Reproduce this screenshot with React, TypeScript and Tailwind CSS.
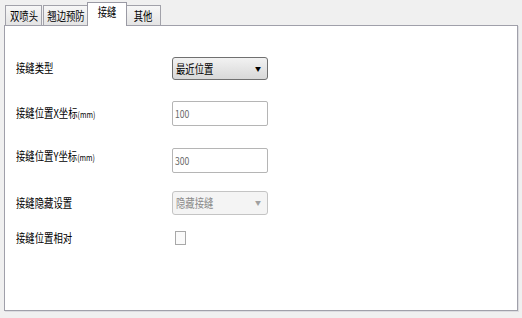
import React from 'react';

const font = { fontFamily: '"Noto Sans CJK SC", "Noto Sans", sans-serif' };

const tabs = ['双喷头', '翘边预防', '接缝', '其他'];

// narrow bitmap-like glyphs of the original dialog
const Narrow: React.FC<{ children: React.ReactNode; className?: string }> = ({ children, className = '' }) => (
  <span className={`inline-block whitespace-nowrap origin-left scale-x-[0.78] ${className}`}>{children}</span>
);

const Tab: React.FC<{ label: string; active?: boolean; w: string }> = ({ label, active, w }) =>
  active ? (
    <div className={`${w} h-[24px] -mb-px -mx-px z-10 bg-white border border-b-0 border-[#9a9aa4] flex items-start justify-center pt-[3px] text-[12px] text-black`}>
      <span className="inline-block whitespace-nowrap scale-x-[0.78]">{label}</span>
    </div>
  ) : (
    <div className={`${w} h-[20px] bg-gradient-to-b from-[#f7f7f7] to-[#e4e4e4] border border-b-0 border-[#a2a2aa] flex items-center justify-center text-[12px] text-black`}>
      <span className="inline-block whitespace-nowrap scale-x-[0.78]">{label}</span>
    </div>
  );

export default function App() {
  return (
    <div className="w-[522px] h-[318px] bg-[#f0f0f0] pl-[4px] pt-[2px] leading-none" style={font}>
      <div className="flex items-end pl-[1px] h-[23px]">
        <Tab label={tabs[0]} w="w-[37px]" />
        <div className="w-[1px]" />
        <Tab label={tabs[1]} w="w-[45px]" />
        <Tab label={tabs[2]} w="w-[40px]" active />
        <Tab label={tabs[3]} w="w-[35px]" />
      </div>
      <div className="w-[514px] h-[286px] bg-white border border-[#a0a0aa] shadow-[1px_1px_0_#dcdce0] pl-[11px] pt-[31px]">
        <div className="flex items-center h-[23px]">
          <div className="w-[156px] text-[12px] text-black -mt-[2px]"><Narrow>接缝类型</Narrow></div>
          <div className="w-[96px] h-[23px] rounded-[3px] border border-[#707070] bg-gradient-to-b from-[#f2f2f2] to-[#d8d8d8] flex items-center justify-between pl-[3px] pr-[6px] text-[12px] text-black">
            <Narrow>最近位置</Narrow>
            <span className="text-[6px]">▼</span>
          </div>
        </div>

        <div className="flex items-center h-[25px] mt-[21px]">
          <div className="w-[156px] text-[12px] text-black -mt-[2px]">
            <Narrow>接缝位置X坐标<span className="text-[9px]">(mm)</span></Narrow>
          </div>
          <div className="w-[96px] h-[25px] border border-[#b5b5b5] rounded-[2px] bg-white flex items-center pl-[2px] text-[11px] text-[#6a6a6a]">
            <Narrow>100</Narrow>
          </div>
        </div>

        <div className="flex items-start h-[25px] mt-[22px]">
          <div className="w-[156px] text-[12px] text-black pt-[2px]">
            <Narrow>接缝位置Y坐标<span className="text-[9px]">(mm)</span></Narrow>
          </div>
          <div className="w-[96px] h-[25px] border border-[#b5b5b5] rounded-[2px] bg-white flex items-center pl-[2px] text-[11px] text-[#6a6a6a]">
            <Narrow>300</Narrow>
          </div>
        </div>

        <div className="flex items-center h-[24px] mt-[18px]">
          <div className="w-[156px] text-[12px] text-black"><Narrow>接缝隐藏设置</Narrow></div>
          <div className="w-[96px] h-[24px] rounded-[3px] border border-[#c4c4c4] bg-[#f4f4f4] flex items-center justify-between pl-[3px] pr-[6px] text-[12px] text-[#8a8a8a]">
            <Narrow>隐藏接缝</Narrow>
            <span className="text-[6px] text-[#a0a0a0]">▼</span>
          </div>
        </div>

        <div className="flex items-center h-[16px] mt-[15px]">
          <div className="w-[159px] text-[12px] text-black"><Narrow>接缝位置相对</Narrow></div>
          <div className="w-[11px] h-[14px] border border-[#a8a8a8] bg-[#fafafa]" />
        </div>
      </div>
    </div>
  );
}
